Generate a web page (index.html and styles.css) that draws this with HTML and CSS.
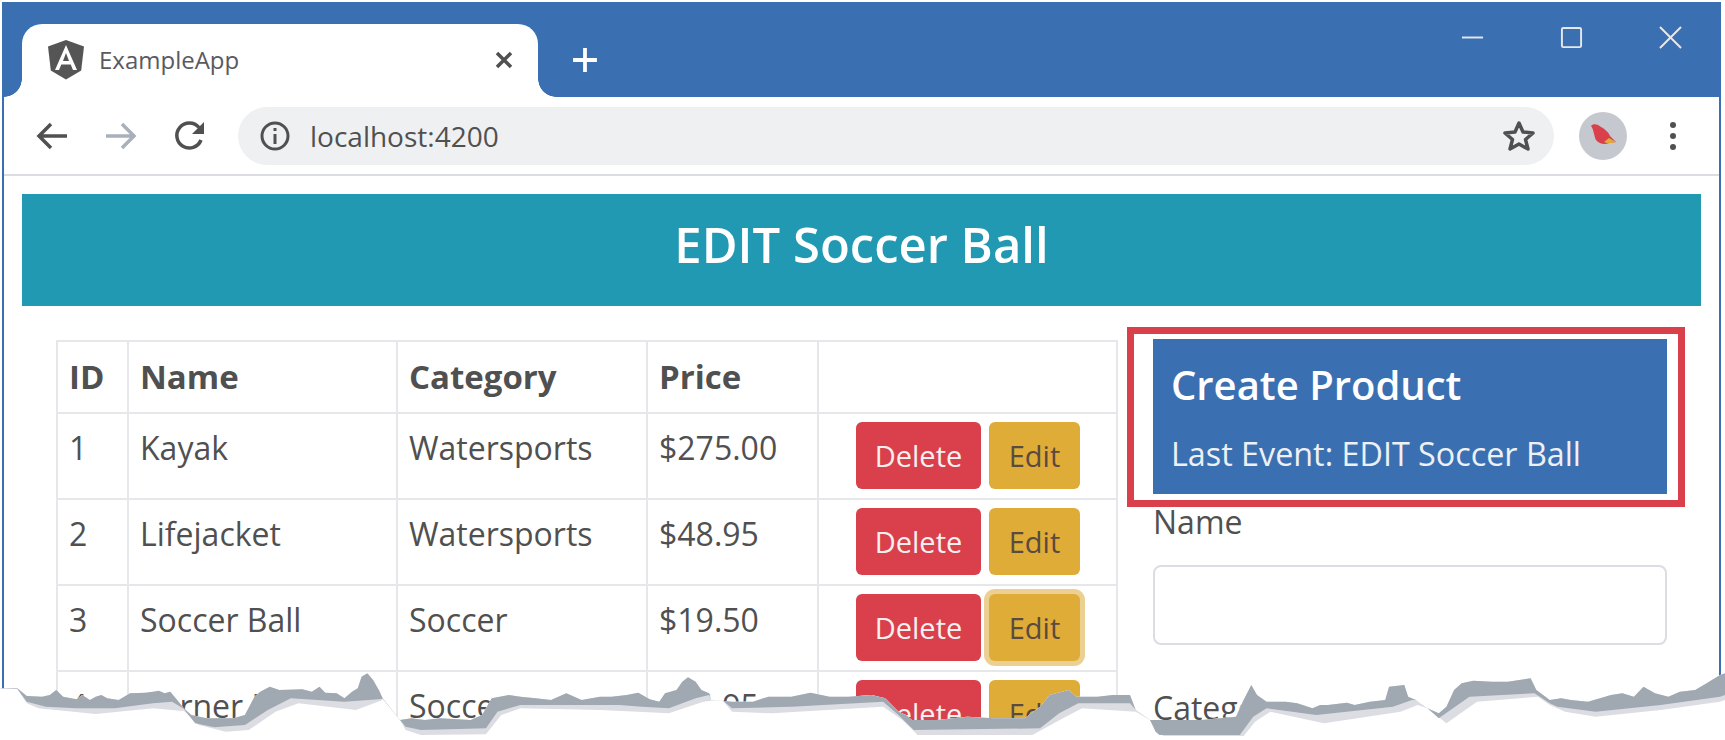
FILE: index.html
```html
<!DOCTYPE html>
<html lang="en">

<head>
    <meta charset="UTF-8">
    <title>ExampleApp</title>
    <link rel="stylesheet" href="styles.css">
</head>

<body>
    <div class="window">
        <div class="titlebar">
            <div class="tab">
                <svg class="tab-logo" viewBox="0 0 36 40">
                    <path fill="#555" d="M18 0 L36 6.500 L33.200 30.500 L18 39.500 L2.800 30.500 L0 6.500 Z" />
                    <path fill="#fff" d="M18 5 L29 30 L25 30 L22.700 24.500 L13.300 24.500 L11 30 L7 30 Z M18 13 L15 21 L21 21 Z" />
                </svg>
                <span class="tab-title">ExampleApp</span>
                <svg class="tab-close" viewBox="0 0 20 20">
                    <path d="M3 3 L17 17 M17 3 L3 17" />
                </svg>
            </div>
            <svg class="new-tab" viewBox="0 0 24 24">
                <path d="M12 1 V23 M1 12 H23" />
            </svg>
            <div class="window-controls">
                <svg viewBox="0 0 24 24">
                    <path d="M1 12 H23" />
                </svg>
                <svg viewBox="0 0 24 24">
                    <rect x="2" y="2" width="20" height="20" rx="1.500" />
                </svg>
                <svg viewBox="0 0 24 24">
                    <path d="M1 1 L23 23 M23 1 L1 23" />
                </svg>
            </div>
        </div>

        <div class="toolbar">
            <svg class="nav-icon" viewBox="0 0 32 32">
                <path d="M31 16 H3 M15 4 L3 16 L15 28" />
            </svg>
            <svg class="nav-icon forward" viewBox="0 0 32 32">
                <path d="M1 16 H29 M17 4 L29 16 L17 28" />
            </svg>
            <svg class="nav-icon reload" viewBox="0 0 32 32">
                <path d="M27 20 A12.500 12.500 0 1 1 25 7.500" />
                <path class="solid" d="M30 2 V14 H18 Z" />
            </svg>
            <div class="omnibox">
                <svg class="info-icon" viewBox="0 0 30 30">
                    <circle cx="15" cy="15" r="13" />
                    <path d="M15 13 V23 M15 7 V10" />
                </svg>
                <span class="url">localhost:4200</span>
                <svg class="star" viewBox="0 0 32 32">
                    <path d="M16 3 L20 12 L30 13 L22.500 19.500 L25 29 L16 24 L7 29 L9.500 19.500 L2 13 L12 12 Z" />
                </svg>
            </div>
            <div class="avatar">
                <svg viewBox="0 0 48 48">
                    <path fill="#da3f4c" d="M12 14 C14 11 19 12 22 15 C26 17 30 21 31 24 L37 30 L30 31 C26 33 20 32 17 28 C15 24 15 18 12 14 Z" />
                    <path fill="#e0ac38" d="M25 30 L30 26 L37 30 L29 31.500 Z" />
                </svg>
            </div>
            <div class="menu-dots"><i></i><i></i><i></i></div>
        </div>

        <div class="page">
            <div class="banner">EDIT Soccer Ball</div>
            <div class="columns">
                <table class="products">
                    <thead>
                        <tr>
                            <th>ID</th>
                            <th>Name</th>
                            <th>Category</th>
                            <th>Price</th>
                            <th></th>
                        </tr>
                    </thead>
                    <tbody>
                        <tr>
                            <td>1</td>
                            <td>Kayak</td>
                            <td>Watersports</td>
                            <td>$275.00</td>
                            <td class="actions"><button class="btn delete">Delete</button><button class="btn edit">Edit</button></td>
                        </tr>
                        <tr>
                            <td>2</td>
                            <td>Lifejacket</td>
                            <td>Watersports</td>
                            <td>$48.95</td>
                            <td class="actions"><button class="btn delete">Delete</button><button class="btn edit">Edit</button></td>
                        </tr>
                        <tr>
                            <td>3</td>
                            <td>Soccer Ball</td>
                            <td>Soccer</td>
                            <td>$19.50</td>
                            <td class="actions"><button class="btn delete">Delete</button><button class="btn edit focused">Edit</button></td>
                        </tr>
                        <tr>
                            <td>4</td>
                            <td>Corner Flags</td>
                            <td>Soccer</td>
                            <td>$34.95</td>
                            <td class="actions"><button class="btn delete">Delete</button><button class="btn edit">Edit</button></td>
                        </tr>
                    </tbody>
                </table>

                <div class="editor">
                    <div class="status">
                        <h3>Create Product</h3>
                        <p>Last Event: EDIT Soccer Ball</p>
                    </div>
                    <label class="field-label">Name</label>
                    <input class="field-input" type="text">
                    <label class="field-label category-label">Category</label>
                </div>
            </div>
        </div>

        <!-- torn paper edge along the bottom of the shot -->
        <svg class="tear" viewBox="0 0 4508 300" preserveAspectRatio="none">
            <clipPath id="belowTear">
                <polygon points="0,145 45,145 70,168 110,170 130,165 147,150 165,170 200,178 215,165 235,180 250,170 265,165 280,175 310,180 340,160 380,158 400,155 415,152 430,160 445,155 470,190 480,205 500,225 540,235 610,235 640,225 665,170 680,155 705,140 730,150 790,148 815,155 835,140 850,158 880,160 900,175 920,155 935,145 945,110 960,100 975,120 990,150 1000,175 1045,240 1075,235 1110,240 1150,235 1230,240 1260,225 1285,175 1330,165 1360,170 1400,175 1440,180 1480,160 1520,180 1568,170 1598,170 1638,165 1668,158 1698,178 1723,185 1738,160 1768,150 1783,125 1798,112 1818,125 1833,150 1853,160 1858,180 1888,182 1913,185 1968,185 2008,170 2068,170 2118,158 2168,170 2218,170 2278,165 2313,175 2348,215 2368,225 2383,240 2448,240 2528,230 2598,235 2678,235 2718,200 2743,165 2793,150 2813,170 2868,170 2908,165 2953,165 2968,210 3005,240 3040,240 3140,240 3230,230 3250,180 3270,135 3285,165 3310,185 3360,185 3390,190 3430,205 3450,195 3470,195 3520,188 3540,195 3580,185 3620,180 3630,140 3670,135 3680,170 3700,180 3730,205 3760,220 3780,200 3800,150 3820,130 3850,122 3900,125 3940,125 4000,115 4015,150 4050,180 4080,175 4105,180 4150,185 4210,165 4240,160 4270,170 4295,140 4325,160 4360,170 4390,155 4430,150 4460,130 4495,105 4508,100 4508,300 0,300" />
            </clipPath>
            <g clip-path="url(#belowTear)">
                <rect width="4508" height="300" fill="#fff" />
                <polygon fill="#dcdde2" points="0,0 0,145 45,146 70,190 100,205 250,222 400,205 470,212 480,212 520,255 590,275 650,270 720,215 780,190 930,210 995,182 1001,176 1045,239 1060,270 1100,285 1270,283 1310,225 1360,205 1568,210 1668,215 1748,220 1838,185 1858,182 1888,181 1913,215 2018,220 2308,200 2358,240 2398,285 2698,285 2778,235 2828,205 2968,215 3005,240 3040,288 3250,288 3280,245 3320,215 3460,250 3660,215 3705,195 3730,205 3780,250 3860,185 4020,170 4050,195 4090,215 4170,230 4340,210 4495,185 4508,180 4508,0" />
                <polygon fill="#a0a8b2" points="0,0 0,145 45,146 70,185 120,200 200,205 300,205 400,190 450,185 480,206 510,250 560,262 640,255 700,210 760,175 900,185 990,178 1000,176 1045,239 1060,260 1100,270 1270,265 1300,215 1360,195 1568,195 1618,195 1678,200 1748,205 1818,175 1853,165 1858,179 1888,181 1913,205 2068,200 2308,185 2348,225 2388,270 2718,265 2768,220 2818,190 2953,190 2968,209 3005,239 3020,275 3030,285 3240,285 3275,230 3310,205 3440,225 3640,200 3690,180 3705,181 3730,204 3760,235 3840,170 4010,160 4050,190 4070,200 4170,215 4340,195 4495,170 4508,165 4508,0" />
            </g>
        </svg>
    </div>
</body>

</html>
```

FILE: styles.css
```css
* {
    box-sizing: border-box;
}

html,
body {
    margin: 0;
    height: 740px;
    overflow: hidden;
    background: #fff;
}

body {
    font-family: "Open Sans", "Noto Sans", sans-serif;
    color: #505050;
}

svg {
    display: block;
    flex: none;
}

.window {
    position: relative;
    height: 740px;
    padding: 2px 4px 0 2px;
}

.window::before {
    content: "";
    position: absolute;
    top: 2px;
    bottom: 50px;
    left: 2px;
    right: 4px;
    border-left: 2px solid #3a70b2;
    border-right: 2px solid #3a70b2;
}

/* title bar */
.titlebar {
    position: relative;
    display: flex;
    height: 95px;
    padding: 22px 0 0 20px;
    background: #3a70b2;
}

.tab {
    position: relative;
    display: flex;
    align-items: center;
    width: 516px;
    height: 73px;
    padding: 0 24px 2px 26px;
    background: #fff;
    border-radius: 20px 20px 0 0;
}

.tab::before,
.tab::after {
    content: "";
    position: absolute;
    bottom: 0;
    width: 18px;
    height: 18px;
}

.tab::before {
    left: -18px;
    background: radial-gradient(circle at 0 0, #3a70b2 17.500px, #fff 18px);
}

.tab::after {
    right: -18px;
    background: radial-gradient(circle at 100% 0, #3a70b2 17.500px, #fff 18px);
}

.tab-logo {
    width: 36px;
    height: 40px;
}

.tab-title {
    flex: 1;
    margin-left: 15px;
    font-size: 24px;
    color: #5a5a5e;
}

.tab-close {
    width: 20px;
    height: 20px;
    fill: none;
    stroke: #505050;
    stroke-width: 3.500;
}

.new-tab {
    width: 26px;
    height: 26px;
    margin: 23px 0 0 34px;
    fill: none;
    stroke: #fff;
    stroke-width: 3.500;
}

.window-controls {
    display: flex;
    gap: 76px;
    margin: 2px 39px 0 auto;
}

.window-controls svg {
    width: 23px;
    height: 23px;
    fill: none;
    stroke: #e8e8ec;
    stroke-width: 2;
}

/* toolbar */
.toolbar {
    display: flex;
    align-items: center;
    height: 79px;
    padding: 0 44px 0 34px;
    background: #fff;
    border-bottom: 2px solid #dcdde2;
}

.nav-icon {
    width: 32px;
    height: 32px;
    margin-right: 37px;
    fill: none;
    stroke: #505050;
    stroke-width: 3.500;
}

.nav-icon.forward {
    stroke: #aab0ba;
}

.nav-icon.reload {
    margin-right: 32px;
}

.nav-icon .solid {
    fill: #505050;
    stroke: none;
}

.omnibox {
    display: flex;
    align-items: center;
    width: 1316px;
    height: 58px;
    padding: 0 19px 0 22px;
    background: #eff0f2;
    border-radius: 29px;
}

.info-icon {
    width: 30px;
    height: 30px;
    fill: none;
    stroke: #505050;
    stroke-width: 3;
}

.url {
    flex: 1;
    margin-left: 20px;
    font-size: 28px;
    color: #505050;
}

.star {
    width: 32px;
    height: 32px;
    fill: none;
    stroke: #505050;
    stroke-width: 3.500;
    stroke-linejoin: round;
}

.avatar {
    width: 48px;
    height: 48px;
    margin-left: 25px;
    background: #c5c8ce;
    border-radius: 50%;
}

.menu-dots {
    display: flex;
    flex-direction: column;
    gap: 5px;
    margin-left: 43px;
}

.menu-dots i {
    display: block;
    width: 6px;
    height: 6px;
    background: #505050;
    border-radius: 50%;
}

/* page */
.page {
    padding: 18px 20px 0;
}

.banner {
    height: 112px;
    line-height: 101px;
    text-align: center;
    font-size: 49px;
    font-weight: 600;
    color: #fff;
    background: #2199b2;
}

.columns {
    display: flex;
    align-items: flex-start;
    padding: 34px 0 0 34px;
}

.products {
    flex: none;
    width: 1062px;
    table-layout: fixed;
    border-collapse: collapse;
    font-size: 32px;
}

.products th,
.products td {
    height: 86px;
    padding: 12px 11px 0;
    text-align: left;
    vertical-align: top;
    border: 2px solid #e6e7ea;
}

.products th {
    height: 72px;
    padding-top: 12px;
    font-size: 33px;
    font-weight: 700;
}

.products th:nth-child(1) {
    width: 71px;
}

.products th:nth-child(2) {
    width: 269px;
}

.products th:nth-child(3) {
    width: 250px;
}

.products th:nth-child(4) {
    width: 171px;
}

.products td.actions {
    padding: 8px 0 0 37px;
}

.btn {
    height: 67px;
    margin-right: 8px;
    padding: 0;
    font-family: inherit;
    font-size: 29px;
    border: none;
    border-radius: 6px;
    vertical-align: top;
}

.delete {
    width: 125px;
    color: #f4f0f0;
    background: #da3f4c;
}

.edit {
    width: 91px;
    color: #5a4a40;
    background: #e0ac38;
}

.edit.focused {
    box-shadow: 0 0 0 5px #ecd091;
}

.editor {
    position: relative;
    width: 514px;
    margin-left: 35px;
}

.status {
    position: relative;
    height: 155px;
    margin-top: -1px;
    padding: 21px 18px 0;
    color: #fff;
    background: #3a70b2;
}

/* annotation frame around the status box */
.status::after {
    content: "";
    position: absolute;
    top: -12px;
    right: -18px;
    bottom: -13px;
    left: -26px;
    border: 7px solid #da3f4c;
}

.status h3 {
    margin: 0;
    font-size: 40px;
    font-weight: 600;
    line-height: 50px;
}

.status p {
    margin: 23px 0 0;
    font-size: 32.300px;
    line-height: 40px;
    color: #eef0f4;
    white-space: nowrap;
}

.field-label {
    display: block;
    margin-top: 8px;
    font-size: 32px;
    line-height: 40px;
}

.field-input {
    display: block;
    width: 100%;
    height: 80px;
    margin-top: 23px;
    background: #fff;
    border: 2px solid #dcdde2;
    border-radius: 8px;
}

.category-label {
    margin-top: 43px;
}

.tear {
    position: absolute;
    top: 640px;
    left: 0;
    width: 1725px;
    height: 100px;
}
```
